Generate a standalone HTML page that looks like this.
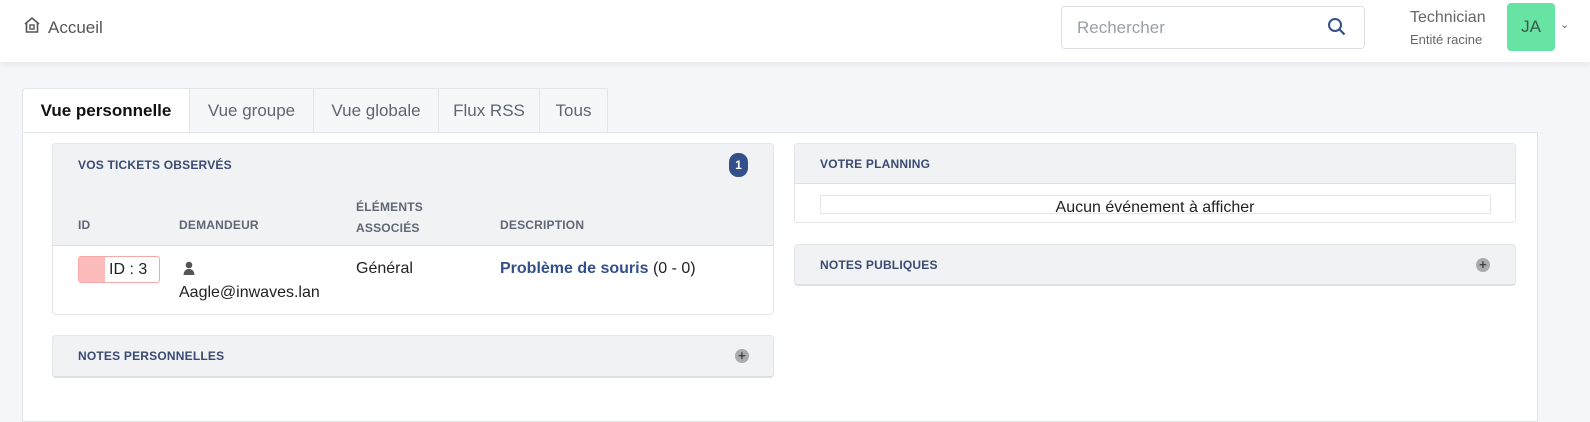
<!DOCTYPE html>
<html><head><meta charset="utf-8"><style>
*{box-sizing:border-box;margin:0;padding:0}
body{width:1590px;height:411px;overflow:hidden;background:#f5f6f9;font-family:"Liberation Sans",sans-serif;position:relative;color:#222}
.hdr{position:absolute;left:0;top:0;width:1590px;height:62px;background:#fff;box-shadow:0 2px 6px rgba(0,0,0,.07)}
.abs{position:absolute}
.tab{position:absolute;top:88px;height:44px;background:#f6f7f9;border:1px solid #e3e5e8;border-bottom:none;font-size:17px;color:#5f6570;line-height:44px;text-align:center}
.card{position:absolute;background:#fff;border:1px solid #e3e5e8;border-radius:4px}
.ph{background:#f1f2f4;color:#3a4a72;font-size:12px;font-weight:bold;letter-spacing:.2px}
.th{position:absolute;font-size:12px;font-weight:bold;color:#606674}
.plus{position:absolute;width:14px;height:14px;border-radius:50%;background:#a9abae;color:#444;font-size:13px;line-height:14px;text-align:center;font-weight:bold}
</style></head><body>
<div class="hdr">
 <svg class="abs" style="left:23px;top:16px" width="18" height="18" viewBox="0 0 18 18"><path d="M2 8 L9 2 L16 8 M3.5 7 V16 H14.5 V7" fill="none" stroke="#555" stroke-width="1.6"/><rect x="7" y="9" width="4" height="4" fill="none" stroke="#555" stroke-width="1.4"/></svg>
 <div class="abs" style="left:48px;top:18px;font-size:17px;color:#555">Accueil</div>
 <div class="abs" style="left:1061px;top:6px;width:304px;height:43px;border:1px solid #dcdfe3;border-radius:4px"></div>
 <div class="abs" style="left:1077px;top:18px;font-size:17px;color:#9aa0a8">Rechercher</div>
 <svg class="abs" style="left:1327px;top:17px" width="20" height="20" viewBox="0 0 20 20"><circle cx="8" cy="8" r="6" fill="none" stroke="#34508a" stroke-width="2"/><path d="M12.5 12.5 L17.5 17.5" stroke="#34508a" stroke-width="2.2"/></svg>
 <div class="abs" style="left:1410px;top:9px;font-size:16px;color:#666">Technician</div>
 <div class="abs" style="left:1410px;top:32px;font-size:13px;color:#666">Entité racine</div>
 <div class="abs" style="left:1507px;top:3px;width:48px;height:48px;background:#67e3a3;border-radius:4px;font-size:17px;color:#3b5a4a;text-align:center;line-height:48px">JA</div>
 <div class="abs" style="left:1560px;top:18px;font-size:11px;color:#666">⌄</div>
</div>
<div class="abs" style="left:22px;top:132px;width:1516px;height:290px;background:#fff;border:1px solid #e3e5e8"></div>
<div class="tab" style="left:22px;width:168px;background:#fff;color:#111;font-weight:bold;border-radius:4px 0 0 0">Vue personnelle</div>
<div class="tab" style="left:189px;width:125px">Vue groupe</div>
<div class="tab" style="left:313px;width:126px">Vue globale</div>
<div class="tab" style="left:438px;width:102px">Flux RSS</div>
<div class="tab" style="left:539px;width:69px">Tous</div>

<div class="card" style="left:52px;top:143px;width:722px;height:172px;overflow:hidden">
 <div class="ph" style="height:102px;border-bottom:1px solid #dcdfe3;position:relative">
  <div class="abs" style="left:25px;top:14px">VOS TICKETS OBSERVÉS</div>
  <div class="abs" style="left:676px;top:9px;width:19px;height:24px;border-radius:9px;background:#34508a;color:#fff;text-align:center;line-height:24px;font-size:12px">1</div>
  <div class="th" style="left:25px;top:74px">ID</div>
  <div class="th" style="left:126px;top:74px">DEMANDEUR</div>
  <div class="th" style="left:303px;top:53px;line-height:21px">ÉLÉMENTS<br>ASSOCIÉS</div>
  <div class="th" style="left:447px;top:74px">DESCRIPTION</div>
 </div>
 <div class="abs" style="left:25px;top:112px;width:82px;height:27px;border:1px solid #f5a8a8;border-radius:3px;overflow:hidden"><div style="width:26px;height:100%;background:#fdbcbc;float:left"></div><span style="float:left;margin-left:4px;line-height:25px;font-size:16px">ID : 3</span></div>
 <svg class="abs" style="left:130px;top:117px" width="12" height="14" viewBox="0 0 12 14"><circle cx="6" cy="4" r="3.3" fill="#555"/><path d="M0.5 14 Q1 8 6 8 Q11 8 11.5 14Z" fill="#555"/></svg>
 <div class="abs" style="left:126px;top:140px;font-size:16px">Aagle@inwaves.lan</div>
 <div class="abs" style="left:303px;top:116px;font-size:16px">Général</div>
 <div class="abs" style="left:447px;top:116px;font-size:16px"><b style="color:#34508a">Problème de souris</b> (0 - 0)</div>
</div>

<div class="card ph" style="left:52px;top:335px;width:722px;height:43px;border-bottom:2px solid #dcdfe3">
 <div class="abs" style="left:25px;top:13px">NOTES PERSONNELLES</div>
 <div class="plus" style="left:682px;top:13px">+</div>
</div>

<div class="card" style="left:794px;top:143px;width:722px;height:80px;overflow:hidden">
 <div class="ph" style="height:40px;border-bottom:1px solid #dcdfe3;position:relative"><div class="abs" style="left:25px;top:13px">VOTRE PLANNING</div></div>
 <div class="abs" style="left:25px;top:51px;width:671px;height:19px;border:1px solid #e3e5e8"></div>
 <div class="abs" style="left:0;width:720px;top:55px;text-align:center;font-size:16px">Aucun événement à afficher</div>
</div>

<div class="card ph" style="left:794px;top:244px;width:722px;height:42px;border-bottom:2px solid #dcdfe3">
 <div class="abs" style="left:25px;top:13px">NOTES PUBLIQUES</div>
 <div class="plus" style="left:681px;top:13px">+</div>
</div>
</body></html>
